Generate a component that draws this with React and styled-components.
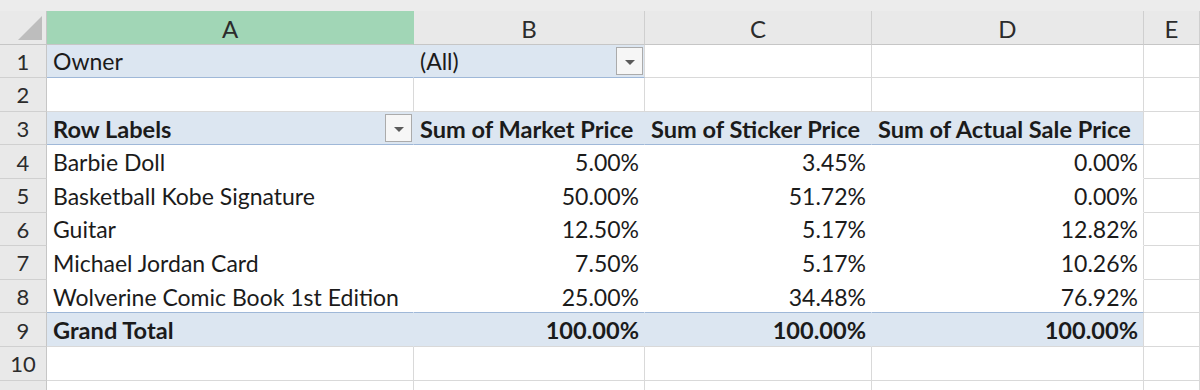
import React from "react";
import styled, { createGlobalStyle } from "styled-components";

const GlobalStyle = createGlobalStyle`
  html, body {
    margin: 0;
    padding: 0;
    background: #ffffff;
  }
  body {
    font-family: Lato, "Liberation Sans", sans-serif;
    color: #1b1b1b;
  }
`;

const COLS = "47px 367px 231px 227px 272px 1fr";
const GRID = "#d9d9d9";
const PIVOT_BLUE = "#dce6f1";
const PIVOT_LINE = "#9fb8d8";

const Page = styled.div`
  width: 1200px;
  height: 390px;
  overflow: hidden;
  background: #ffffff;
`;

const TopBand = styled.div`
  height: 11px;
  background: #ececec;
`;

const Sheet = styled.div`
  display: grid;
  grid-template-columns: ${COLS};
  grid-auto-rows: 33.6px;
`;

const Corner = styled.div`
  position: relative;
  background: #e9e9e9;
  border-right: 1px solid #c6c6c6;
  border-bottom: 1px solid #c6c6c6;
  height: 34px;
  box-sizing: border-box;

  &::after {
    content: "";
    position: absolute;
    right: 4px;
    bottom: 4px;
    width: 0;
    height: 0;
    border-left: 24px solid transparent;
    border-bottom: 24px solid #bdbdbd;
  }
`;

const ColHead = styled.div`
  display: flex;
  align-items: center;
  justify-content: center;
  height: 34px;
  box-sizing: border-box;
  padding-top: 1px;
  background: ${(p) => (p.$active ? "#a1d6b6" : "#e9e9e9")};
  border-right: 1px solid ${(p) => (p.$active ? "#a1d6b6" : "#cfcfcf")};
  border-bottom: 1px solid #c6c6c6;
  font-size: 24px;
  color: #2c2c2c;
`;

const RowHead = styled.div`
  display: flex;
  align-items: center;
  justify-content: center;
  background: #e9e9e9;
  border-right: 1px solid #c6c6c6;
  border-bottom: 1px solid #d0d0d0;
  font-size: 22px;
  color: #2c2c2c;
  box-sizing: border-box;
  padding-top: 1px;
`;

const Cell = styled.div`
  position: relative;
  display: flex;
  align-items: center;
  justify-content: ${(p) => (p.$right ? "flex-end" : "flex-start")};
  padding: 1px 5px 0 6px;
  box-sizing: border-box;
  background: ${(p) => (p.$blue ? PIVOT_BLUE : "#ffffff")};
  border-right: 1px solid ${(p) => (p.$noRight ? "transparent" : GRID)};
  border-bottom: 1px solid
    ${(p) => (p.$line ? PIVOT_LINE : p.$noBottom ? "transparent" : GRID)};
  font-size: ${(p) => (p.$bold ? "23.6px" : "23px")};
  font-weight: ${(p) => (p.$bold ? 700 : 400)};
  white-space: nowrap;
`;

const DropButton = styled.div`
  position: absolute;
  right: ${(p) => p.$right || 1}px;
  top: 50%;
  transform: translateY(-50%);
  width: 27px;
  height: 28px;
  box-sizing: border-box;
  background: #f6f6f6;
  border: 1px solid #ababab;
  display: flex;
  align-items: center;
  justify-content: center;

  &::after {
    content: "";
    width: 0;
    height: 0;
    margin-top: 3px;
    border-left: 5px solid transparent;
    border-right: 5px solid transparent;
    border-top: 5px solid #5a5a5a;
  }
`;

const rows = [
  ["Barbie Doll", "5.00%", "3.45%", "0.00%"],
  ["Basketball Kobe Signature", "50.00%", "51.72%", "0.00%"],
  ["Guitar", "12.50%", "5.17%", "12.82%"],
  ["Michael Jordan Card", "7.50%", "5.17%", "10.26%"],
  ["Wolverine Comic Book 1st Edition", "25.00%", "34.48%", "76.92%"],
];

const App = () => {
  return (
    <Page>
      <GlobalStyle />
      <TopBand />
      <Sheet>
        {/* column headers */}
        <Corner />
        <ColHead $active>A</ColHead>
        <ColHead>B</ColHead>
        <ColHead>C</ColHead>
        <ColHead>D</ColHead>
        <ColHead>E</ColHead>

        {/* report filter */}
        <RowHead>1</RowHead>
        <Cell $blue $noRight $line>Owner</Cell>
        <Cell $blue $line>
          (All)
          <DropButton $right={0} />
        </Cell>
        <Cell />
        <Cell />
        <Cell />

        <RowHead>2</RowHead>
        <Cell />
        <Cell />
        <Cell />
        <Cell />
        <Cell />

        {/* pivot header */}
        <RowHead>3</RowHead>
        <Cell $blue $noRight $line $bold>
          Row Labels
          <DropButton $right={1} />
        </Cell>
        <Cell $blue $noRight $line $bold>Sum of Market Price</Cell>
        <Cell $blue $noRight $line $bold>Sum of Sticker Price</Cell>
        <Cell $blue $line $bold>Sum of Actual Sale Price</Cell>
        <Cell />

        {rows.map((r, i) => (
          <React.Fragment key={r[0]}>
            <RowHead>{i + 4}</RowHead>
            <Cell $noRight $noBottom={i < 4} $line={i === 4}>{r[0]}</Cell>
            <Cell $right $noRight $noBottom={i < 4} $line={i === 4}>{r[1]}</Cell>
            <Cell $right $noRight $noBottom={i < 4} $line={i === 4}>{r[2]}</Cell>
            <Cell $right $noBottom={i < 4} $line={i === 4}>{r[3]}</Cell>
            <Cell />
          </React.Fragment>
        ))}

        {/* grand total */}
        <RowHead>9</RowHead>
        <Cell $blue $noRight $bold>Grand Total</Cell>
        <Cell $blue $noRight $right $bold>100.00%</Cell>
        <Cell $blue $noRight $right $bold>100.00%</Cell>
        <Cell $blue $right $bold>100.00%</Cell>
        <Cell />

        <RowHead>10</RowHead>
        <Cell />
        <Cell />
        <Cell />
        <Cell />
        <Cell />

        <RowHead />
        <Cell />
        <Cell />
        <Cell />
        <Cell />
        <Cell />
      </Sheet>
    </Page>
  );
};

export default App;
